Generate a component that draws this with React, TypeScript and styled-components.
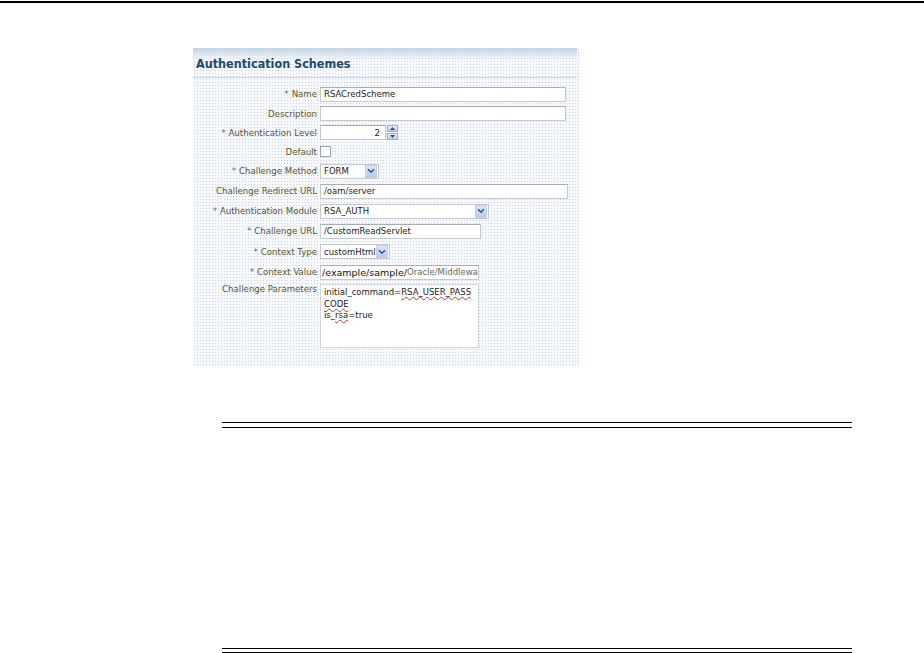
import React from "react";
import styled, { createGlobalStyle } from "styled-components";

const Global = createGlobalStyle`
  html, body { margin: 0; padding: 0; background: #fff; }
  body { font-family: "Liberation Sans", Arial, sans-serif; }
`;

const Page = styled.div`
  width: 924px;
  height: 653px;
  position: relative;
  overflow: hidden;
  background: #fff;
`;

const TopRule = styled.div`
  margin-top: 1px;
  height: 2px;
  background: #000;
`;

const Panel = styled.div`
  margin: 45px 0 0 193px;
  width: 386px;
  height: 319px;
  background-color: #f6f8fc;
  background-image: radial-gradient(#c6d1ea 0.75px, transparent 0.95px);
  background-size: 3px 3px;
  display: flex;
  flex-direction: column;
`;

const Header = styled.div`
  height: 30px;
  display: flex;
  align-items: center;
  padding-left: 3px;
  padding-top: 2px;
  box-sizing: border-box;
  background: linear-gradient(#c2d2e2 0px, #dde7f0 6px, rgba(255,255,255,0) 12px);
  border-bottom: 1px solid #cdd3da;
  margin: 0 2px 0 0;
`;

const Title = styled.h1`
  margin: 0;
  font-family: "DejaVu Sans Condensed", "DejaVu Sans", Tahoma, sans-serif;
  font-stretch: condensed;
  font-size: 12.5px;
  font-weight: bold;
  color: #1d4a6e;
`;

const Form = styled.div`
  padding-top: 6px;
  display: flex;
  flex-direction: column;
`;

const Row = styled.div<{ $h: number; $top?: boolean }>`
  height: ${(p) => p.$h}px;
  display: grid;
  grid-template-columns: 124px 1fr;
  column-gap: 3px;
  align-items: ${(p) => (p.$top ? "start" : "center")};
`;

const Label = styled.label<{ $top?: boolean }>`
  justify-self: end;
  font-family: "DejaVu Sans", Tahoma, sans-serif;
  font-size: 8.6px;
  color: #5a5628;
  white-space: nowrap;
  padding-top: ${(p) => (p.$top ? "2px" : "0")};
`;

const Req = styled.span`
  color: #3f6fb8;
  margin-right: 3px;
`;

const Field = styled.div`
  display: flex;
  align-items: center;
  gap: 1px;
`;

const TextBox = styled.div<{ $w: number }>`
  width: ${(p) => p.$w}px;
  height: 15px;
  box-sizing: border-box;
  background: #fff;
  border: 1px solid #c5c9cf;
  border-top-color: #a9adb3;
  font-family: "DejaVu Sans", Tahoma, sans-serif;
  font-size: 8.5px;
  color: #222;
  padding: 0 3px;
  display: flex;
  align-items: center;
  white-space: nowrap;
  overflow: hidden;
`;

const ValueBox = styled(TextBox)`
  padding: 0 1px;
`;

const NumBox = styled(TextBox)`
  justify-content: flex-end;
  padding-right: 5px;
`;

const BigText = styled.span`
  font-size: 9.5px;
  color: #111;
`;

const GreyText = styled.span`
  color: #666;
  font-size: 8.5px;
`;

const Spinner = styled.div`
  width: 11px;
  height: 15px;
  display: flex;
  flex-direction: column;
  gap: 1px;
`;

const SpinBtn = styled.div`
  flex: 1;
  background: linear-gradient(#e6eefa, #b9cbe6);
  border: 1px solid #9eb1cc;
  display: flex;
  align-items: center;
  justify-content: center;
`;

const Check = styled.div`
  width: 11px;
  height: 11px;
  box-sizing: border-box;
  border: 1px solid #9ea3a9;
  background: #fff;
`;

const DropBtn = styled.div`
  width: 12px;
  height: 13px;
  box-sizing: border-box;
  background: linear-gradient(#dbe6f6, #b8cbea);
  border: 1px solid #c2cfe4;
  display: flex;
  align-items: center;
  justify-content: center;
  flex-shrink: 0;
`;

const Select = styled.div<{ $w: number }>`
  width: ${(p) => p.$w}px;
  height: 15px;
  box-sizing: border-box;
  background: #fff;
  border: 1px solid #c5c9cf;
  font-family: "DejaVu Sans", Tahoma, sans-serif;
  font-size: 8.5px;
  color: #222;
  padding: 0 1px 0 3px;
  display: flex;
  align-items: center;
  justify-content: space-between;
  white-space: nowrap;
  overflow: hidden;
`;

const TextArea = styled.div`
  width: 159px;
  height: 64px;
  margin-top: 2px;
  box-sizing: border-box;
  background: #fff;
  border: 1px solid #d2d5da;
  font-family: "DejaVu Sans", Tahoma, sans-serif;
  font-size: 8.5px;
  line-height: 11.5px;
  color: #222;
  padding: 2px 3px;
  white-space: pre;
  overflow: hidden;
`;

const Squiggle = styled.span`
  text-decoration: underline wavy #d03030;
  text-decoration-thickness: 1px;
  text-underline-offset: 1px;
`;

const Note = styled.div`
  margin: 55px 0 0 222px;
  width: 630px;
  border-top: 1px solid #000;
  border-bottom: 1px solid #000;
  padding: 4px 0 3px;
`;

const NoteInner = styled.div`
  height: 220px;
  border-top: 1px solid #000;
  border-bottom: 1px solid #000;
`;

const Chevron = () => (
  <svg width="8" height="6" viewBox="0 0 8 6">
    <path d="M1 1.2 L4 4.2 L7 1.2" stroke="#2f56a0" strokeWidth="1.6" fill="none" />
  </svg>
);

const Tri = ({ up }: { up?: boolean }) => (
  <svg width="5" height="3" viewBox="0 0 5 3">
    <path d={up ? "M0 3 L2.5 0 L5 3 Z" : "M0 0 L2.5 3 L5 0 Z"} fill="#2d4f86" />
  </svg>
);

export default function App() {
  return (
    <Page>
      <Global />
      <TopRule />
      <Panel>
        <Header>
          <Title>Authentication Schemes</Title>
        </Header>
        <Form>
          <Row $h={20}>
            <Label><Req>*</Req>Name</Label>
            <Field><TextBox $w={246}>RSACredScheme</TextBox></Field>
          </Row>
          <Row $h={19}>
            <Label>Description</Label>
            <Field><TextBox $w={246} /></Field>
          </Row>
          <Row $h={19}>
            <Label><Req>*</Req>Authentication Level</Label>
            <Field>
              <NumBox $w={66}>2</NumBox>
              <Spinner>
                <SpinBtn><Tri up /></SpinBtn>
                <SpinBtn><Tri /></SpinBtn>
              </Spinner>
            </Field>
          </Row>
          <Row $h={19}>
            <Label>Default</Label>
            <Field><Check /></Field>
          </Row>
          <Row $h={20}>
            <Label><Req>*</Req>Challenge Method</Label>
            <Field>
              <Select $w={59}>FORM<DropBtn><Chevron /></DropBtn></Select>
            </Field>
          </Row>
          <Row $h={20}>
            <Label>Challenge Redirect URL</Label>
            <Field><TextBox $w={248}>/oam/server</TextBox></Field>
          </Row>
          <Row $h={20}>
            <Label><Req>*</Req>Authentication Module</Label>
            <Field>
              <Select $w={169}>RSA_AUTH<DropBtn><Chevron /></DropBtn></Select>
            </Field>
          </Row>
          <Row $h={20}>
            <Label><Req>*</Req>Challenge URL</Label>
            <Field><TextBox $w={161}>/CustomReadServlet</TextBox></Field>
          </Row>
          <Row $h={21}>
            <Label><Req>*</Req>Context Type</Label>
            <Field>
              <Select $w={70}>customHtml<DropBtn><Chevron /></DropBtn></Select>
            </Field>
          </Row>
          <Row $h={20}>
            <Label><Req>*</Req>Context Value</Label>
            <Field>
              <ValueBox $w={159}>
                <BigText>/example/sample/</BigText>
                <GreyText>Oracle/Middlewa</GreyText>
              </ValueBox>
            </Field>
          </Row>
          <Row $h={70} $top>
            <Label $top>Challenge Parameters</Label>
            <Field>
              <TextArea>
                initial_command=<Squiggle>RSA_USER_PASS</Squiggle>
                {"\n"}
                <Squiggle>CODE</Squiggle>
                {"\n"}
                is_<Squiggle>rsa</Squiggle>=true
              </TextArea>
            </Field>
          </Row>
        </Form>
      </Panel>
      <Note>
        <NoteInner />
      </Note>
    </Page>
  );
}
